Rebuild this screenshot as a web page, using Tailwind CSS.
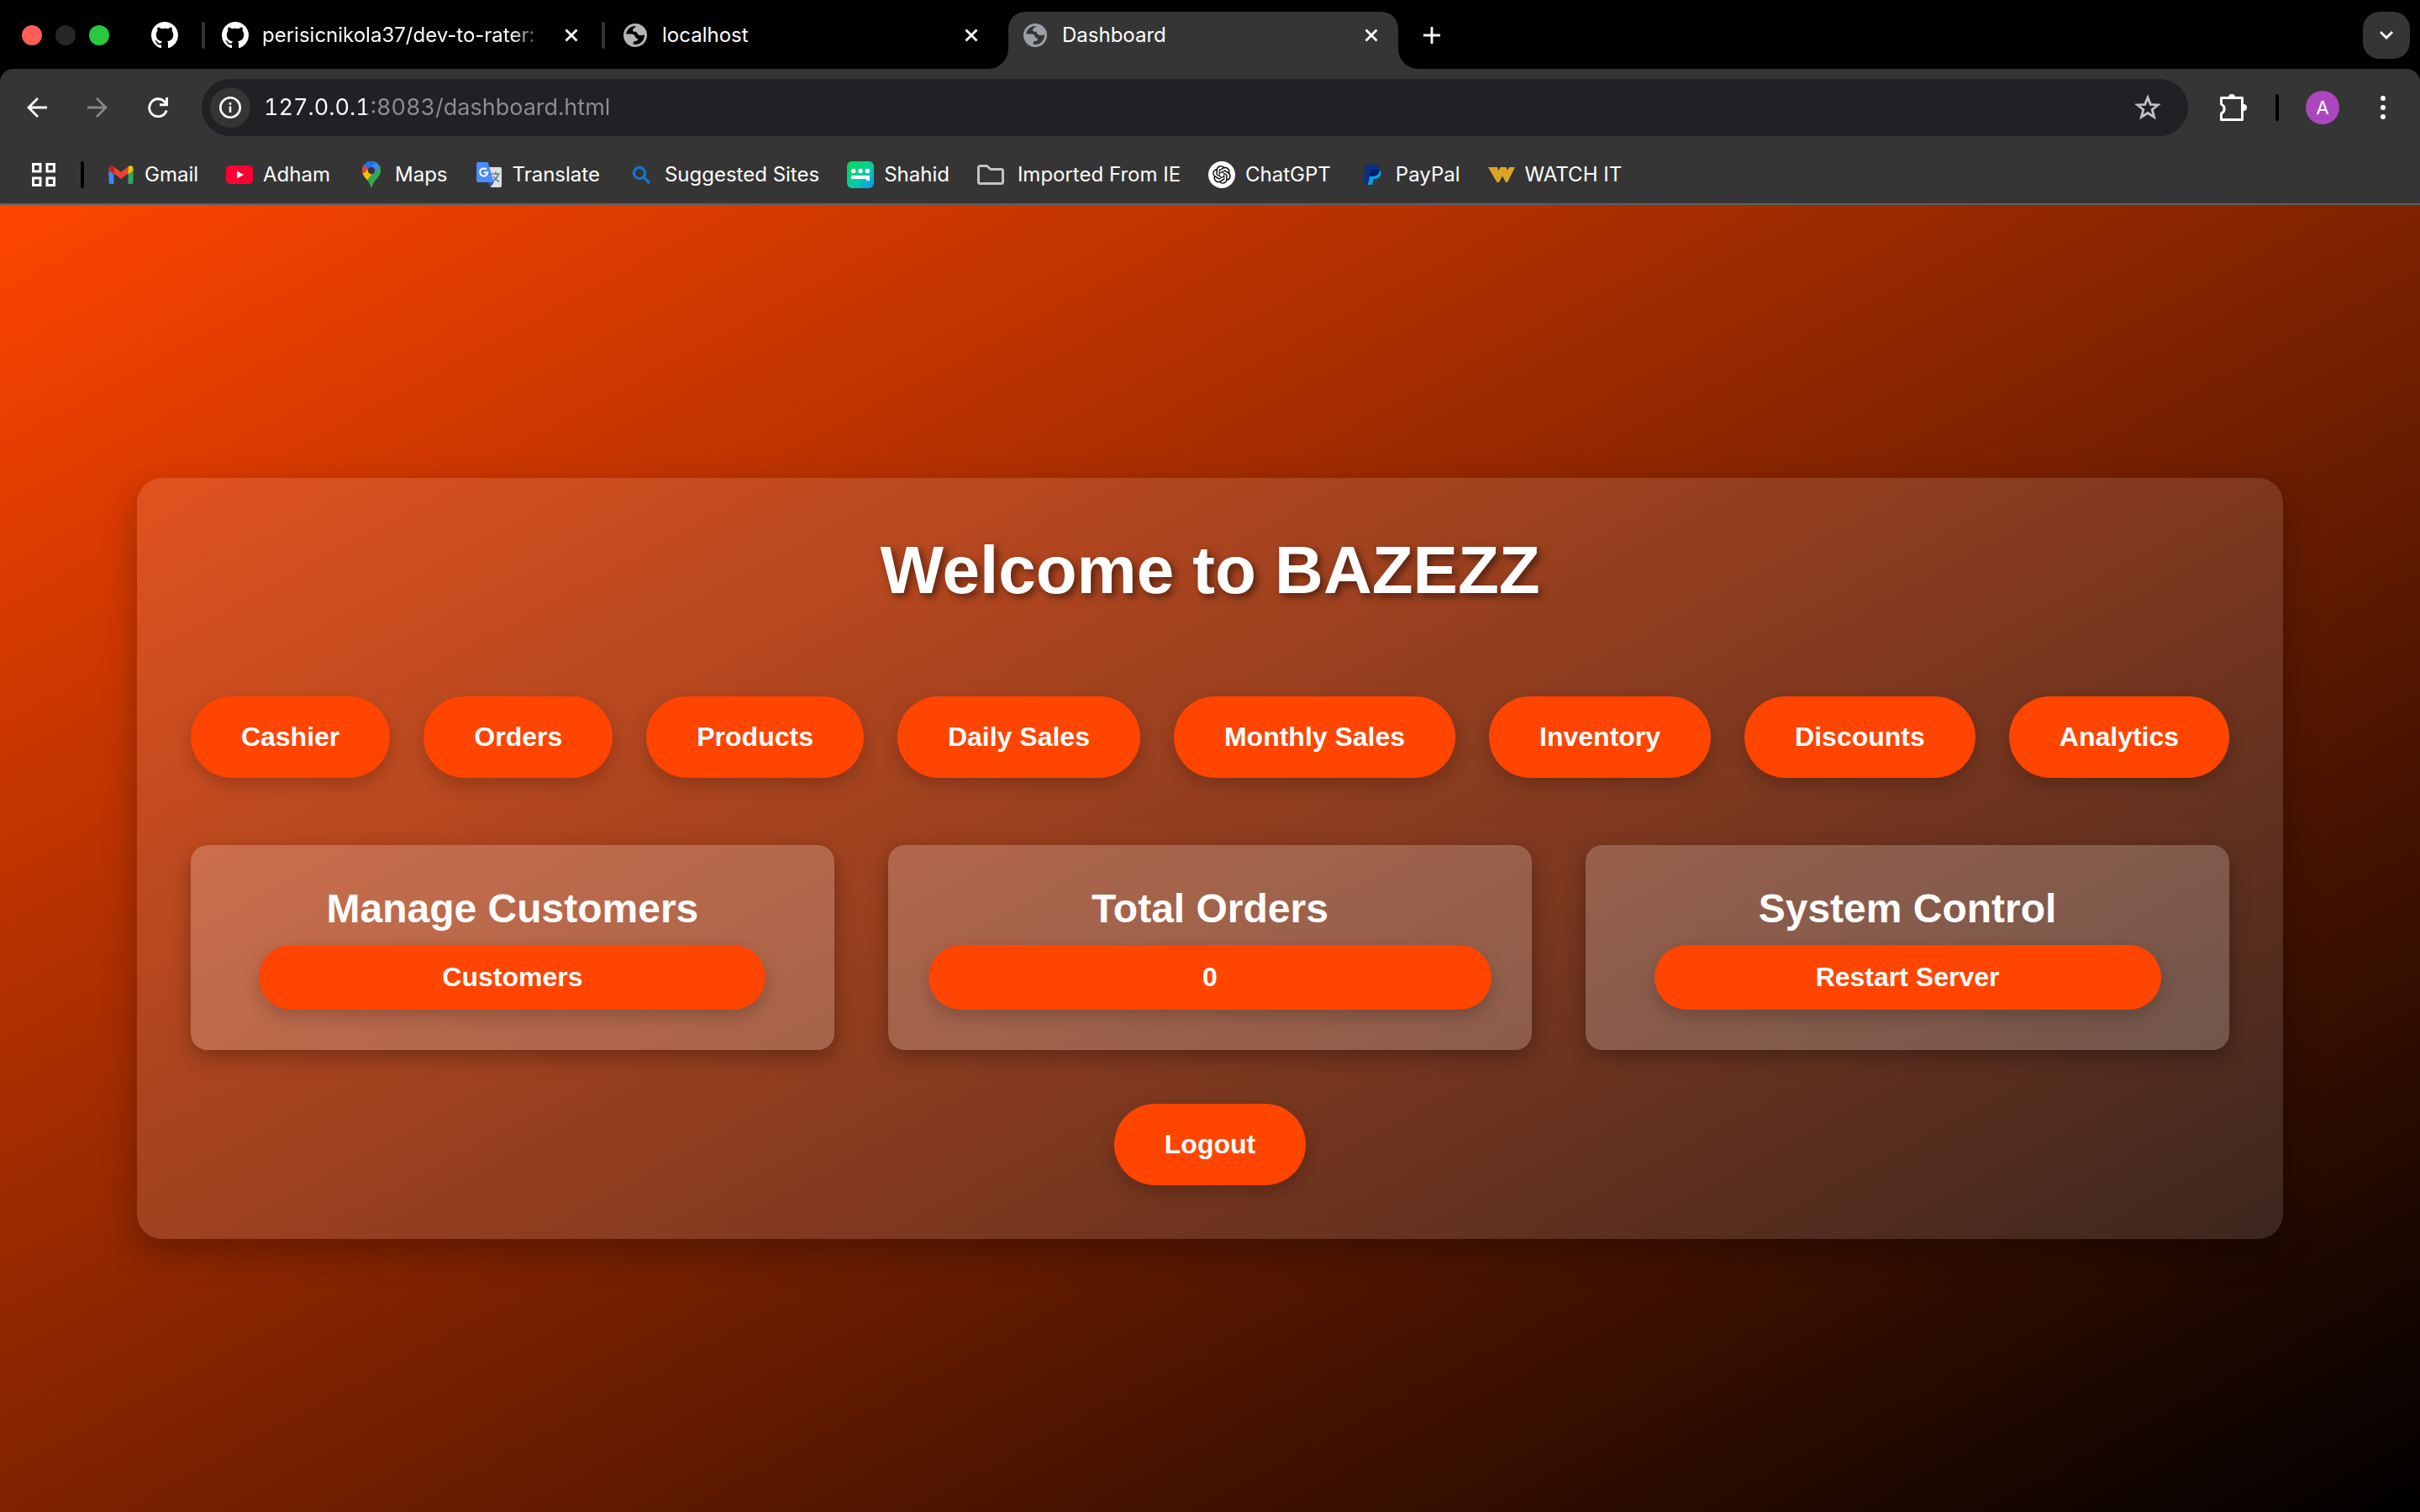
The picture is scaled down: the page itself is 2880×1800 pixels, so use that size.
<!DOCTYPE html>
<html lang="en">
<head>
<meta charset="utf-8">
<meta name="viewport" content="width=device-width, initial-scale=1">
<title>Dashboard</title>
<script src="https://cdn.jsdelivr.net/npm/@tailwindcss/browser@4"></script>
</head>
<body class="flex min-h-screen flex-col bg-black font-['Inter',sans-serif] text-[24px] leading-8 text-white">
<svg class="hidden" aria-hidden="true">
  <symbol id="github" viewBox="0 0 16 16"><path fill="currentColor" d="M8 0C3.58 0 0 3.58 0 8c0 3.54 2.29 6.53 5.47 7.59.4.07.55-.17.55-.38 0-.19-.01-.82-.01-1.49-2.01.37-2.53-.49-2.69-.94-.09-.23-.48-.94-.82-1.13-.28-.15-.68-.52-.01-.53.63-.01 1.08.58 1.23.82.72 1.21 1.87.87 2.33.66.07-.52.28-.87.51-1.07-1.78-.2-3.64-.89-3.64-3.95 0-.87.31-1.59.82-2.15-.08-.2-.36-1.02.08-2.12 0 0 .67-.21 2.2.82.64-.18 1.32-.27 2-.27s1.36.09 2 .27c1.53-1.04 2.2-.82 2.2-.82.44 1.1.16 1.92.08 2.12.51.56.82 1.27.82 2.15 0 3.07-1.87 3.75-3.65 3.95.29.25.54.73.54 1.48 0 1.07-.01 1.93-.01 2.2 0 .21.15.46.55.38A8.01 8.01 0 0 0 16 8c0-4.42-3.58-8-8-8z"/></symbol>
  <symbol id="globe" viewBox="0 0 32 32"><circle cx="16" cy="16" r="12.500" fill="none" stroke="currentColor" stroke-width="3"/><path fill="currentColor" d="M19 3.500C17.500 6 14 6.500 13 9.500C12.700 11 14 12 16 11.700C18.500 11.600 18 14.500 20 15.500C22 16.500 25 16 28.500 15C28 9 24 4 19 3.500zM4 14.500L11.500 14.500C14 14.500 15.500 16 16 18C16.500 20 19.500 19 19 21.500C18.700 23 16.500 22.500 14 23.500L13.500 28C8 27 4 22 4 14.500z"/></symbol>
  <symbol id="close" viewBox="0 0 16 16"><path d="M1.500 1.500l13 13M14.500 1.500l-13 13" stroke="currentColor" stroke-width="2.800"/></symbol>
</svg>

<header class="shrink-0">
  <nav aria-label="Tabs" class="flex h-[82px] items-center pt-0.5 pl-[26px] pr-3">
    <div class="flex gap-4">
      <button aria-label="Close window" class="size-6 rounded-full bg-[#ff5f57]"></button>
      <button aria-label="Minimize window" class="size-6 rounded-full bg-[#262626]"></button>
      <button aria-label="Zoom window" class="size-6 rounded-full bg-[#28c840]"></button>
    </div>
    <button aria-label="GitHub" class="ml-[50px] mr-7"><svg class="size-8"><use href="#github"/></svg></button>
    <span class="h-8 w-1 rounded-full bg-[#333]"></span>
    <div class="flex w-[472px] items-center gap-4 pl-5 pr-7">
      <svg class="size-8 shrink-0"><use href="#github"/></svg>
      <span class="flex-1 whitespace-nowrap [mask-image:linear-gradient(to_right,black_88%,transparent)]">perisicnikola37/dev-to-rater:</span>
      <button aria-label="Close tab" class="ml-2"><svg class="size-4"><use href="#close"/></svg></button>
    </div>
    <span class="h-8 w-1 rounded-full bg-[#333]"></span>
    <div class="flex w-[480px] items-center gap-4 pl-5 pr-9">
      <svg class="size-8 shrink-0 text-[#b4b4b4]"><use href="#globe"/></svg>
      <span class="flex-1">localhost</span>
      <button aria-label="Close tab"><svg class="size-4"><use href="#close"/></svg></button>
    </div>
    <div class="relative flex h-[68px] w-[464px] items-center gap-4 self-end rounded-t-[20px] bg-[#353535] pb-3 pl-4 pr-6">
      <svg viewBox="0 0 24 24" class="absolute bottom-0 -left-6 size-6" fill="#353535"><path d="M24 0v24H0A24 24 0 0 0 24 0z"/></svg>
      <svg class="size-8 shrink-0 text-[#9aa0a6]"><use href="#globe"/></svg>
      <span class="flex-1">Dashboard</span>
      <button aria-label="Close tab"><svg class="size-4"><use href="#close"/></svg></button>
      <svg viewBox="0 0 24 24" class="absolute bottom-0 -right-6 size-6" fill="#353535"><path d="M0 0v24h24A24 24 0 0 1 0 0z"/></svg>
    </div>
    <button aria-label="New tab" class="ml-[30px]"><svg viewBox="0 0 20 20" class="size-5"><path d="M10 0v20M0 10h20" stroke="#fff" stroke-width="2.800"/></svg></button>
    <button aria-label="Search tabs" class="ml-auto flex size-14 items-center justify-center rounded-[20px] bg-[#353535]"><svg viewBox="0 0 16 16" class="size-4" fill="none"><path d="M1 4l7 7 7-7" stroke="#fff" stroke-width="2.800"/></svg></button>
  </nav>

  <div class="rounded-t-2xl border-b-2 border-[#5f5f5f] bg-[#353535]">
    <div class="flex items-center px-8 py-3">
      <div class="flex gap-12">
        <button aria-label="Back"><svg viewBox="0 0 24 24" class="size-6" fill="none" stroke="#fff" stroke-width="2.800"><path d="M24 12H2.500M13 1L2 12l11 11"/></svg></button>
        <button aria-label="Forward" disabled><svg viewBox="0 0 24 24" class="size-6" fill="none" stroke="#868686" stroke-width="2.800"><path d="M0 12h21.500M11 1l11 11-11 11"/></svg></button>
        <button aria-label="Reload"><svg viewBox="0 0 24 24" class="size-6" fill="none" stroke="#fff" stroke-width="2.900"><path d="M22.200 15.500A10.500 10.500 0 1 1 20 5.200l2 2.500M22.500 0v8.700H14"/></svg></button>
      </div>
      <div class="ml-10 flex h-[68px] flex-1 items-center rounded-full bg-[#202124] pl-[10px] pr-8">
        <button aria-label="View site information" class="flex size-12 items-center justify-center rounded-full bg-[#353535]"><svg viewBox="0 0 26 26" class="size-[26px]" fill="none" stroke="#fff" stroke-width="2.600"><circle cx="13" cy="13" r="11.700"/><path d="M13 11.500V19M13 7v2.700"/></svg></button>
        <input aria-label="Address" type="text" value="127.0.0.1:8083/dashboard.html" class="ml-4 min-w-0 flex-1 bg-[linear-gradient(to_right,#fff_122px,#8e8e8e_122px)] bg-clip-text text-[27px] leading-9 tabular-nums text-transparent outline-none">
        <button aria-label="Bookmark this tab"><svg viewBox="0 0 32 32" class="size-8" fill="none" stroke="#c2c2c2" stroke-width="2.800"><path d="M16 4l3.300 8.300 8.900.6-6.900 5.600 2.300 8.800L16 22.500l-7.600 4.800 2.300-8.800-6.900-5.600 8.900-.6z"/></svg></button>
      </div>
      <button aria-label="Extensions" class="ml-9"><svg viewBox="0 0 34 34" class="size-[34px]"><path fill="none" stroke="#fff" stroke-width="3" stroke-linejoin="round" d="M3.500 5.500H28.500V31.500H3.500V24A6 6 0 0 0 3.500 13z"/><path fill="#fff" d="M12 5a4 4 0 0 1 8 0zM30 13a4 4 0 0 1 0 8z"/></svg></button>
      <span class="ml-[34px] h-8 w-1 rounded-full bg-black"></span>
      <button aria-label="Profile" class="ml-8 size-10 rounded-full bg-[#ab47bc] text-[22px] leading-10">A</button>
      <button aria-label="Menu" class="ml-10"><svg viewBox="0 0 24 28" class="h-7 w-6" fill="#fff"><circle cx="12" cy="3" r="3"/><circle cx="12" cy="14" r="3"/><circle cx="12" cy="25" r="3"/></svg></button>
    </div>

    <nav aria-label="Bookmarks" class="flex h-[68px] items-center whitespace-nowrap pl-[38px]">
      <button aria-label="Apps"><svg viewBox="0 0 28 28" class="size-7" fill="none" stroke="#fff" stroke-width="3"><path d="M1.500 1.500h8.500v8.500H1.500zM18 1.500h8.500v8.500H18zM1.500 18h8.500v8.500H1.500zM18 18h8.500v8.500H18z"/></svg></button>
      <span class="ml-[30px] mr-7 h-8 w-1 rounded-full bg-black"></span>
      <div class="flex gap-[33px]">
        <a href="#" class="flex gap-3"><svg viewBox="0 0 32 32" class="size-8"><path fill="#4285f4" d="M1.500 9l6 4.500V27H3.500a2 2 0 0 1-2-2z"/><path fill="#34a853" d="M30.500 9l-6 4.500V27h4a2 2 0 0 0 2-2z"/><path fill="#ea4335" d="M7.500 6.500L16 13l8.500-6.500v8L16 21l-8.500-6.500z"/><path fill="#fbbc04" d="M24.500 6.500c3-2.500 6-1 6 2.500v2l-6 4.500z"/><path fill="#c5221f" d="M7.500 6.500c-3-2.500-6-1-6 2.500v2l6 4.500z"/></svg>Gmail</a>
        <a href="#" class="flex gap-3"><svg viewBox="0 0 32 32" class="size-8"><rect y="5" width="32" height="22" rx="5" fill="#ff0033"/><path fill="#fff" d="M13 11.500l8 4.500-8 4.500z"/></svg>Adham</a>
        <a href="#" class="flex gap-3"><svg viewBox="0 0 32 32" class="size-8"><clipPath id="pin"><path d="M16 0c6.200 0 11 4.800 11 11 0 8-8.500 10-11 21-2.500-11-11-13-11-21C5 4.800 9.800 0 16 0z"/></clipPath><g clip-path="url(#pin)"><path fill="#34a853" d="M0 0h32v32H0z"/><path fill="#fbbc04" d="M0 14L7 15 20 0h-6L24 6 9 24 0 24z"/><path fill="#ea4335" d="M0 2h7l6 5-8 10H0z"/><path fill="#1a73e8" d="M6 4l6 5 12-8V-2H6z"/><path fill="#4285f4" d="M24 0l4 7-8 9-8-7 10-8z"/><path fill="#34a853" d="M25.500 5.500L32 8v24H12l0-4z"/><path fill="#fbbc04" d="M5 15l7-4 4 5-6.500 7.500z"/></g><circle cx="16" cy="11" r="4.200" fill="#353535"/></svg>Maps</a>
        <a href="#" class="flex gap-3"><svg viewBox="0 0 32 32" class="size-8"><path fill="#e0e0e0" d="M13 7h16a2 2 0 0 1 2 2v20a2 2 0 0 1-2 2H18z"/><path fill="#3f51b5" d="M15 25h7l-4.500 6z"/><path fill="#4b8bf4" d="M3 1h11.500L22 25H3a2 2 0 0 1-2-2V3a2 2 0 0 1 2-2z"/><path fill="none" stroke="#fff" stroke-width="2" d="M13 9.800a4.600 4.600 0 1 0 1.300 3.400H9.800"/><path fill="none" stroke="#607d8b" stroke-width="1.600" d="M19 15h10M24 12.500V15M27 15c-1 4-4 7-6 8.500M21.500 18c1.500 3 4 5 6.500 6.500"/></svg>Translate</a>
        <a href="#" class="flex gap-3"><svg viewBox="0 0 32 32" class="size-8" fill="none" stroke="#1573c8" stroke-width="3.400"><circle cx="14" cy="14" r="6.600"/><path d="M18.700 18.700l6.500 6.500" stroke-linecap="round"/></svg>Suggested Sites</a>
        <a href="#" class="flex gap-3"><svg viewBox="0 0 32 32" class="size-8"><linearGradient id="shahid" x1="0" y1="0" x2="1" y2="1"><stop offset="0.100" stop-color="#07d65f"/><stop offset="0.550" stop-color="#08cda0"/><stop offset="1" stop-color="#0395ff"/></linearGradient><rect width="32" height="32" rx="6" fill="url(#shahid)"/><g fill="#fff"><circle cx="7.700" cy="11.500" r="2.700"/><circle cx="16" cy="11.500" r="2.700"/><circle cx="24.300" cy="11.500" r="2.700"/><path d="M5 17h22v6h-4v-2H5z"/></g></svg>Shahid</a>
        <a href="#" class="flex gap-4"><svg viewBox="0 0 32 32" class="size-8" fill="none" stroke="#c4c4c4" stroke-width="3" stroke-linejoin="round"><path d="M1.500 7.500a2 2 0 0 1 2-2h8l4.500 4H28.500a2 2 0 0 1 2 2v13a2 2 0 0 1-2 2h-25a2 2 0 0 1-2-2z"/></svg>Imported From IE</a>
        <a href="#" class="flex gap-3"><svg viewBox="0 0 32 32" class="size-8"><circle cx="16" cy="16" r="16" fill="#fff"/><path transform="translate(5.200 5.200) scale(.9)" d="M22.2819 9.8211a5.9847 5.9847 0 0 0-.5157-4.9108 6.0462 6.0462 0 0 0-6.5098-2.9A6.0651 6.0651 0 0 0 4.9807 4.1818a5.9847 5.9847 0 0 0-3.9977 2.9 6.0462 6.0462 0 0 0 .7427 7.0966 5.98 5.98 0 0 0 .511 4.9107 6.051 6.051 0 0 0 6.5146 2.9001A5.9847 5.9847 0 0 0 13.2599 24a6.0557 6.0557 0 0 0 5.7718-4.2058 5.9894 5.9894 0 0 0 3.9977-2.9001 6.0557 6.0557 0 0 0-.7475-7.0729zm-9.022 12.6081a4.4755 4.4755 0 0 1-2.8764-1.0408l.1419-.0804 4.7783-2.7582a.7948.7948 0 0 0 .3927-.6813v-6.7369l2.02 1.1686a.071.071 0 0 1 .038.052v5.5826a4.504 4.504 0 0 1-4.4945 4.4944zm-9.6607-4.1254a4.4708 4.4708 0 0 1-.5346-3.0137l.142.0852 4.783 2.7582a.7712.7712 0 0 0 .7806 0l5.8428-3.3685v2.3324a.0804.0804 0 0 1-.0332.0615L9.74 19.9502a4.4992 4.4992 0 0 1-6.1408-1.6464zM2.3408 7.8956a4.485 4.485 0 0 1 2.3655-1.9728V11.6a.7664.7664 0 0 0 .3879.6765l5.8144 3.3543-2.0201 1.1685a.0757.0757 0 0 1-.071 0l-4.8303-2.7865A4.504 4.504 0 0 1 2.3408 7.872zm16.5963 3.8558L13.1038 8.364 15.1192 7.2a.0757.0757 0 0 1 .071 0l4.8303 2.7913a4.4944 4.4944 0 0 1-.6765 8.1042v-5.6772a.79.79 0 0 0-.407-.667zm2.0107-3.0231l-.142-.0852-4.7735-2.7818a.7759.7759 0 0 0-.7854 0L9.409 9.2297V6.8974a.0662.0662 0 0 1 .0284-.0615l4.8303-2.7866a4.4992 4.4992 0 0 1 6.6802 4.66zM8.3065 12.863l-2.02-1.1638a.0804.0804 0 0 1-.038-.0567V6.0742a4.4992 4.4992 0 0 1 7.3757-3.4537l-.142.0805L8.704 5.459a.7948.7948 0 0 0-.3927.6813zm1.0976-2.3654l2.602-1.4998 2.6069 1.4998v2.9994l-2.5974 1.4997-2.6067-1.4997Z"/></svg>ChatGPT</a>
        <a href="#" class="flex gap-3"><svg viewBox="0 0 32 32" class="size-8"><path fill="#0a9be0" d="M24.500 10c3 2 2.500 6 .5 8.500-2 2.500-5 2.500-7.500 2.500l-1.200 7h-5.600l2-14z"/><path fill="#0b2f86" d="M8.300 4H18c5.500 0 7.500 3 6.500 7.500C23.500 16.500 20 18 13 18l-1.300 7.500H5.300z"/><path fill="#001c64" d="M14 10h10.500v1.500C23.500 16.500 20 18 13 18z"/></svg>PayPal</a>
        <a href="#" class="flex gap-3"><svg viewBox="0 0 32 32" class="size-8"><path fill="#dca326" d="M0 7h11l1.500 4L14.500 7h7l1.500 4L25 7h7l-9 18h-2l-4-7.500L13 25h-2.500z"/></svg>WATCH IT</a>
      </div>
    </nav>
  </div>
</header>

<main class="flex flex-1 items-center justify-center bg-[linear-gradient(to_bottom_right,#ff4500,#000)] p-10 font-['Liberation_Sans',Arial,sans-serif] text-[32px] leading-[37px] font-bold">
  <section class="max-w-full rounded-[30px] bg-white/12 p-16 text-center shadow-[0_16px_40px_rgba(0,0,0,0.3)]">
    <h1 class="text-[80px] leading-[92px] [text-shadow:4px_4px_10px_rgba(0,0,0,0.5)]">Welcome to BAZEZZ</h1>

    <nav aria-label="Sections" class="mt-[104px] flex flex-wrap justify-center gap-10">
      <a href="#" class="rounded-full bg-[#ff4500] px-[60px] py-[30px] shadow-[0_8px_20px_rgba(0,0,0,0.2)]">Cashier</a>
      <a href="#" class="rounded-full bg-[#ff4500] px-[60px] py-[30px] shadow-[0_8px_20px_rgba(0,0,0,0.2)]">Orders</a>
      <a href="#" class="rounded-full bg-[#ff4500] px-[60px] py-[30px] shadow-[0_8px_20px_rgba(0,0,0,0.2)]">Products</a>
      <a href="#" class="rounded-full bg-[#ff4500] px-[60px] py-[30px] shadow-[0_8px_20px_rgba(0,0,0,0.2)]">Daily Sales</a>
      <a href="#" class="rounded-full bg-[#ff4500] px-[60px] py-[30px] shadow-[0_8px_20px_rgba(0,0,0,0.2)]">Monthly Sales</a>
      <a href="#" class="rounded-full bg-[#ff4500] px-[60px] py-[30px] shadow-[0_8px_20px_rgba(0,0,0,0.2)]">Inventory</a>
      <a href="#" class="rounded-full bg-[#ff4500] px-[60px] py-[30px] shadow-[0_8px_20px_rgba(0,0,0,0.2)]">Discounts</a>
      <a href="#" class="rounded-full bg-[#ff4500] px-[60px] py-[30px] shadow-[0_8px_20px_rgba(0,0,0,0.2)]">Analytics</a>
    </nav>

    <div class="mt-20 grid grid-cols-3 gap-16">
      <article class="rounded-[20px] bg-white/20 p-12 shadow-[0_8px_24px_rgba(0,0,0,0.3)]">
        <h2 class="text-[48px] leading-[55px]">Manage Customers</h2>
        <button class="mt-4 w-[90%] rounded-full bg-[#ff4500] py-5 shadow-[0_8px_20px_rgba(0,0,0,0.2)]">Customers</button>
      </article>
      <article class="rounded-[20px] bg-white/20 p-12 shadow-[0_8px_24px_rgba(0,0,0,0.3)]">
        <h2 class="text-[48px] leading-[55px]">Total Orders</h2>
        <p class="mt-4 rounded-full bg-[#ff4500] py-5 shadow-[0_8px_20px_rgba(0,0,0,0.2)]">0</p>
      </article>
      <article class="rounded-[20px] bg-white/20 p-12 shadow-[0_8px_24px_rgba(0,0,0,0.3)]">
        <h2 class="text-[48px] leading-[55px]">System Control</h2>
        <button class="mt-4 w-[90%] rounded-full bg-[#ff4500] py-5 shadow-[0_8px_20px_rgba(0,0,0,0.2)]">Restart Server</button>
      </article>
    </div>

    <button class="mt-16 rounded-full bg-[#ff4500] px-[60px] py-[30px] shadow-[0_8px_20px_rgba(0,0,0,0.2)]">Logout</button>
  </section>
</main>
</body>
</html>
